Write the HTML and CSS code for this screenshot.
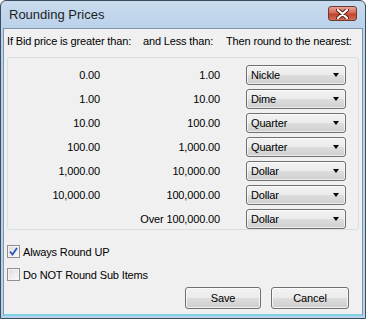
FILE: index.html
```html
<!DOCTYPE html>
<html>
<head>
<meta charset="utf-8">
<link rel="stylesheet" href="styles.css">
</head>
<body>
<div class="window">
  <div class="titlebar">
    <span class="title">Rounding Prices</span>
    <div class="close"><svg width="13" height="10" viewBox="0 0 13 10"><path d="M2 1 L11 9 M11 1 L2 9" stroke="#5a1a10" stroke-width="4" stroke-linecap="round"/><path d="M2 1 L11 9 M11 1 L2 9" stroke="#fff" stroke-width="2.2" stroke-linecap="round"/></svg></div>
  </div>
  <div class="client">
    <div class="header">
      <span class="h1">If Bid price is greater than:</span>
      <span class="h2">and Less than:</span>
      <span class="h3">Then round to the nearest:</span>
    </div>
    <div class="group">
      <div class="row"><span class="c1">0.00</span><span class="c2">1.00</span><div class="combo"><span>Nickle</span><i class="arrow"></i></div></div>
      <div class="row"><span class="c1">1.00</span><span class="c2">10.00</span><div class="combo"><span>Dime</span><i class="arrow"></i></div></div>
      <div class="row"><span class="c1">10.00</span><span class="c2">100.00</span><div class="combo"><span>Quarter</span><i class="arrow"></i></div></div>
      <div class="row"><span class="c1">100.00</span><span class="c2">1,000.00</span><div class="combo"><span>Quarter</span><i class="arrow"></i></div></div>
      <div class="row"><span class="c1">1,000.00</span><span class="c2">10,000.00</span><div class="combo"><span>Dollar</span><i class="arrow"></i></div></div>
      <div class="row"><span class="c1">10,000.00</span><span class="c2">100,000.00</span><div class="combo"><span>Dollar</span><i class="arrow"></i></div></div>
      <div class="row"><span class="c1"></span><span class="c2">Over 100,000.00</span><div class="combo"><span>Dollar</span><i class="arrow"></i></div></div>
    </div>
    <label class="check"><span class="box checked"><svg width="9" height="9" viewBox="0 0 9 9"><path d="M1 4.5 L3.5 7.5 L8 1" fill="none" stroke="#2b55b8" stroke-width="1.8"/></svg></span>Always Round UP</label>
    <label class="check"><span class="box"></span>Do NOT Round Sub Items</label>
    <div class="buttons">
      <div class="btn">Save</div>
      <div class="btn wide">Cancel</div>
    </div>
  </div>
</div>
</body>
</html>
```
FILE: styles.css
```css
* { box-sizing: border-box; }
html, body { margin: 0; padding: 0; background: #fff; }
body { width: 366px; height: 319px; overflow: hidden; font-family: "Liberation Sans", Arial, sans-serif; font-size: 11px; letter-spacing: -0.15px; color: #000; white-space: nowrap; }
.window {
  width: 366px; height: 319px;
  border: 1px solid #3c4d5e;
  border-radius: 6px 6px 0 0;
  background: linear-gradient(#c9dbee, #b9d1ea 30px, #b9d1ea);
  padding: 0 2px 2px 2px;
  display: flex; flex-direction: column;
}
.titlebar { height: 27px; display: flex; align-items: center; padding-left: 6px; position: relative; }
.title { font-size: 13px; letter-spacing: 0; color: #1e1e1e; }
.close {
  position: absolute; right: 6px; top: 5px; width: 29px; height: 15px;
  border: 1px solid #6d3a33; border-radius: 3px;
  background: linear-gradient(#e8a395, #d46a55 45%, #c3432a 55%, #d0705a);
  display: flex; align-items: center; justify-content: center;
}
.client {
  flex: 1; background: #f0f0f0; border: 1px solid #7f95ab; border-bottom: 2px solid #7fd2e6;
  padding: 0 3px;
  display: flex; flex-direction: column;
}
.header { display: flex; height: 24px; align-items: center; }
.h1 { width: 136px; }
.h2 { width: 83px; }
.group {
  margin-top: 4px; height: 173px; border: 1px solid #d5dfe5; border-radius: 3px;
  padding: 7px 0 0 0; display: flex; flex-direction: column; gap: 4px;
}
.row { display: grid; grid-template-columns: 92px 120px 126px; align-items: center; height: 20px; }
.c1, .c2 { text-align: right; }
.combo {
  margin-left: 26px;
  height: 20px; border: 1px solid #707070; border-radius: 3px;
  background: linear-gradient(#f2f2f2, #ebebeb 50%, #dddddd 50%, #cfcfcf);
  display: flex; align-items: center; justify-content: space-between; padding: 0 6px 0 4px;
  box-shadow: inset 0 0 0 1px rgba(255,255,255,0.6);
}
.arrow { width: 0; height: 0; border-left: 3.5px solid transparent; border-right: 3.5px solid transparent; border-top: 4px solid #000; }
.check { display: flex; align-items: center; height: 23px; gap: 3px; }
.check:first-of-type { margin-top: 10px; }
.box {
  width: 13px; height: 13px; border: 1px solid #8f8f8f; background: linear-gradient(135deg, #dcdcdc, #fbfbfb);
  box-shadow: inset 0 0 0 1px #f4f4f4; display: flex; align-items: center; justify-content: center;
}
.buttons { display: flex; justify-content: flex-end; gap: 10px; margin-top: 1px; padding-right: 10px; }
.btn {
  width: 76px; height: 22px; border: 1px solid #707070; border-radius: 3px;
  background: linear-gradient(#f2f2f2, #ebebeb 50%, #dddddd 50%, #cfcfcf);
  box-shadow: inset 0 0 0 1px rgba(255,255,255,0.7);
  display: flex; align-items: center; justify-content: center;
}
.btn.wide { width: 78px; }
```
